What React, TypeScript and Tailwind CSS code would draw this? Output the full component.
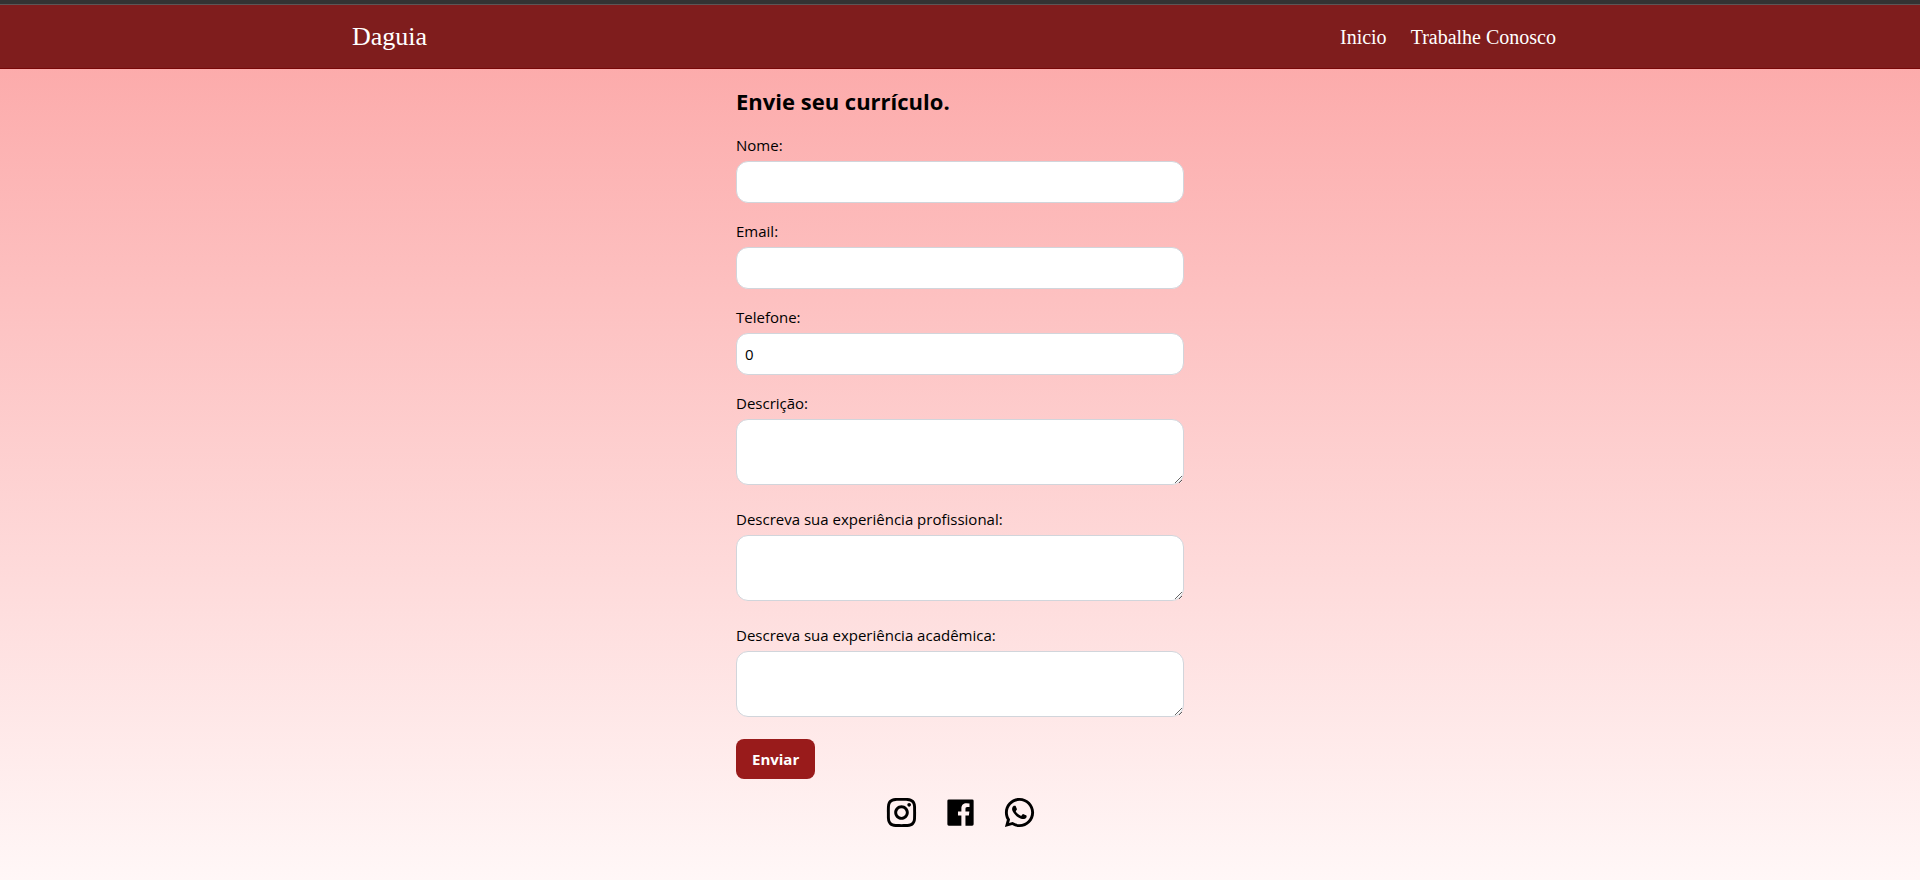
import { RiInstagramLine, RiWhatsappLine } from "react-icons/ri";

const fieldClass =
  "w-full rounded-xl border border-[#d1d5db] bg-white p-2 text-black outline-none focus:border-[#991b1b]";

function TextField({ id, label, type, value }: { id: string; label: string; type: string; value?: string }) {
  return (
    <div className="mb-4">
      <label htmlFor={id} className="mb-1 block">
        {label}
      </label>
      <input id={id} name={id} type={type} defaultValue={value} className={`block ${fieldClass}`} />
    </div>
  );
}

function AreaField({ id, label }: { id: string; label: string }) {
  return (
    <div className="mb-4 pb-1.5">
      <label htmlFor={id} className="mb-1 block">
        {label}
      </label>
      <textarea id={id} name={id} rows={2} className={`block resize ${fieldClass}`} />
    </div>
  );
}

function FacebookIcon() {
  return (
    <svg viewBox="0 0 24 24" width="35" height="35" fill="currentColor" aria-hidden="true">
      <path d="M15.4 21v-6.97h2.33l.35-2.72H15.4V9.58c0-.78.22-1.32 1.34-1.32h1.44V5.83a19 19 0 0 0-2.09-.11c-2.07 0-3.49 1.26-3.49 3.59v2h-2.33v2.72h2.33V21H4a1 1 0 0 1-1-1V4a1 1 0 0 1 1-1h16a1 1 0 0 1 1 1v16a1 1 0 0 1-1 1h-4.6z" />
    </svg>
  );
}

function Header() {
  return (
    <header className="border-t-4 border-[#333333] bg-[#7f1d1d] font-['Liberation_Serif',serif] text-white">
      <div className="border-t border-b border-t-[#5c5555] border-b-[#780808]">
        <div className="mx-auto flex h-[63px] max-w-7xl items-center justify-between px-8">
          <a href="#" className="text-[26px]">
            Daguia
          </a>
          <nav className="flex text-xl">
            <a href="#" className="px-3">
              Inicio
            </a>
            <a href="#" className="px-3">
              Trabalhe Conosco
            </a>
          </nav>
        </div>
      </div>
    </header>
  );
}

export default function App() {
  return (
    <div className="min-h-screen bg-linear-to-b/srgb from-[#fca5a5] to-[#fff7f7] font-['Open_Sans',sans-serif] text-[15px] leading-6 text-black">
      <Header />
      <main className="pt-4">
        <form className="mx-auto max-w-md">
          <h1 className="mb-4 text-[22px] leading-8 font-bold">Envie seu currículo.</h1>
          <TextField id="nome" label="Nome:" type="text" />
          <TextField id="email" label="Email:" type="email" />
          <TextField id="telefone" label="Telefone:" type="text" value="0" />
          <AreaField id="descricao" label="Descrição:" />
          <AreaField id="profissional" label="Descreva sua experiência profissional:" />
          <AreaField id="academica" label="Descreva sua experiência acadêmica:" />
          <button type="submit" className="block rounded-lg bg-[#991b1b] px-4 py-2 font-bold text-white">
            Enviar
          </button>
        </form>
      </main>
      <footer className="flex justify-center gap-6 py-4">
        <a href="#" aria-label="Instagram">
          <RiInstagramLine size={35} />
        </a>
        <a href="#" aria-label="Facebook">
          <FacebookIcon />
        </a>
        <a href="#" aria-label="WhatsApp">
          <RiWhatsappLine size={35} />
        </a>
      </footer>
    </div>
  );
}
